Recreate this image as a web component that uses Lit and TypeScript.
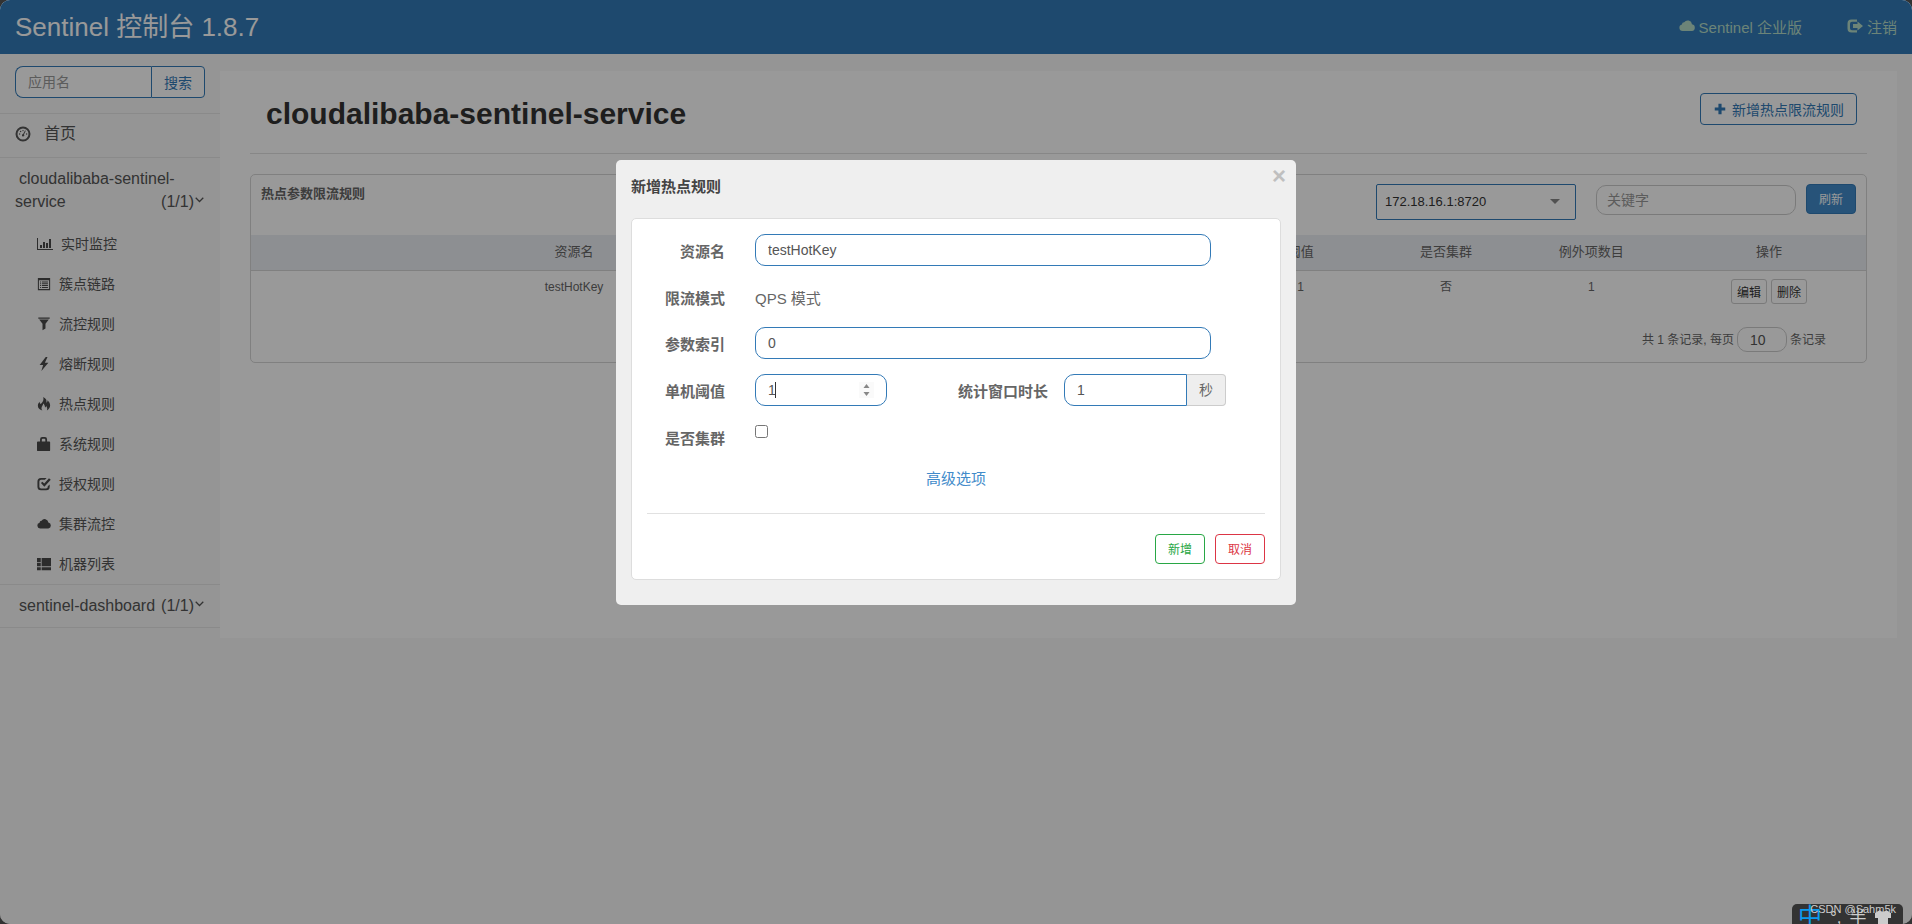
import { LitElement, html, css, svg } from "lit";
import { customElement, property, state } from "lit/decorators.js";

const glyphs: Record<string, unknown> = {
  dashboard: svg`<path fill-rule="evenodd" d="M8 .5a7.5 7.5 0 1 0 0 15 7.5 7.5 0 0 0 0-15zm0 2a5.5 5.5 0 1 1 0 11 5.5 5.5 0 0 1 0-11z"/><circle cx="4.600" cy="8" r=".7"/><circle cx="5.600" cy="5.500" r=".7"/><circle cx="8" cy="4.600" r=".7"/><circle cx="11.600" cy="8" r=".7"/><path d="M10 4.400l.8.4-1.800 3.600a1.200 1.200 0 1 1-.9-.4z"/>`,
  stats: svg`<path d="M0 2h1v11h15v1H0zM3 9h2v3H3zM6 6h2v6H6zM9 7h2v5H9zM12 3h2v9h-2z"/>`,
  list: svg`<path fill-rule="evenodd" d="M1 1h14v14H1zm1.200 2.600v10.200h11.600V3.600z"/><path d="M3.500 5h1.200v1.200H3.500zM5.700 5h6.800v1.200H5.700zM3.500 7.100h1.200v1.200H3.500zM5.700 7.100h6.800v1.200H5.700zM3.500 9.200h1.200v1.200H3.500zM5.700 9.200h6.800v1.200H5.700zM3.500 11.300h1.200v1.200H3.500zM5.700 11.300h6.800v1.200H5.700z"/>`,
  filter: svg`<path d="M1.500 .5h13V2h-13zM2.500 2.800h11L9.700 7.800V13L6.300 15V7.800z"/>`,
  flash: svg`<path d="M10 0L3 9h4l-2 7 8-9.500H9L12 0z"/>`,
  fire: svg`<path d="M7 0c3.500 1.500 4.500 4 3.600 6.500 1-.3 1.500-1.200 1.300-2.700 2.200 1.800 3.100 3.900 3.100 6 0 2.500-1.500 4.400-3.700 5.500.7-1.900.4-3.500-.9-5-.2 1-.6 1.500-1.200 1.700C9 9.700 8.200 8.200 7 7.500c.2 2.100-1.900 3.200-1.900 5.300 0 1 .4 1.900 1 2.700C3 14.700 1 12.700 1 10c0-1.700.8-3.200 2-4.500 0 1.200.3 2 1 2.500C6.400 6.300 8.200 3.500 7 0z"/>`,
  lock: svg`<path fill-rule="evenodd" d="M3.500 5V2.500A2.500 2.500 0 0 1 6 0h3a2.500 2.500 0 0 1 2.500 2.500V5H14a1 1 0 0 1 1 1v9a1 1 0 0 1-1 1H1a1 1 0 0 1-1-1V6a1 1 0 0 1 1-1zM5.500 5h4V3a1 1 0 0 0-1-1h-2a1 1 0 0 0-1 1z"/>`,
  check: svg`<path d="M11 1H4.500a4 4 0 0 0-4 4v6a4 4 0 0 0 4 4h6a4 4 0 0 0 4-4V8.500l-2.200 2.200v.3a2 2 0 0 1-2 2H4.700a2 2 0 0 1-2-2V5.200a2 2 0 0 1 2-2H9z"/><path d="M4.500 6.800l1.600-1.500L8.300 7.500 13.700 1.500 15.700 3.200 8.400 11z"/>`,
  cloud: svg`<path d="M3.500 13a3.300 3.300 0 0 1-.6-6.500A2.300 2.300 0 0 1 5.200 4.300 4.300 4.300 0 0 1 13 6.300 3.400 3.400 0 0 1 13 13z"/>`,
  machines: svg`<path d="M0 1h4.300V5.700H0zM0 6.600h4.300v4.100H0zM0 11.600h4.300v3.400H0zM5.300 1H16V10.700H5.300zM5.300 11.600H16v3.400H5.300z"/>`,
  logout: svg`<path d="M10 1.500H4.500a4 4 0 0 0-4 4v5a4 4 0 0 0 4 4H10v-2.200H5A2 2 0 0 1 3 10.300V5.700a2 2 0 0 1 2-2h5z"/><path d="M10.500 3.500L16 8l-5.500 4.500V10H6V6h4.500z"/>`,
  plus: svg`<path d="M6.200 2h3.600v4.200H14v3.600H9.800V14H6.200V9.800H2V6.200h4.200z"/>`,
  angle: svg`<path d="M2.500 5.500L8 11l5.500-5.500" fill="none" stroke="currentColor" stroke-width="1.800"/>`,
  shirt: svg`<path d="M5 2L0 5v5h3v6h10v-6h3V5l-5-3c-1 2-5 2-6 0z"/>`,
};

@customElement("ui-icon")
export class UiIcon extends LitElement {
  @property() name = "";
  @property({ type: Number }) size = 14;
  static styles = css`
    :host {
      display: inline-flex;
      flex: none;
    }
    svg {
      display: block;
      fill: currentColor;
    }
  `;
  render() {
    return html`<svg width=${this.size} height=${this.size} viewBox="0 0 16 16" aria-hidden="true">${glyphs[this.name]}</svg>`;
  }
}

const base = css`
  :host,
  button,
  input,
  select {
    font-family: "Liberation Sans", Arial, "Noto Sans CJK SC", sans-serif;
  }
  *,
  *::before,
  *::after {
    box-sizing: border-box;
  }
  input,
  select,
  button {
    margin: 0;
    outline: none;
  }
  button {
    cursor: pointer;
    padding: 0;
  }
  a {
    text-decoration: none;
  }
  .field {
    width: 100%;
    height: 32px;
    padding: 0 12px;
    border: 1px solid #337ab7;
    border-radius: 10px;
    background: #fff;
    color: #555;
    font-size: 14px;
  }
  .field::placeholder {
    color: #999;
    opacity: 1;
  }
`;

const menu = [
  ["stats", "实时监控"],
  ["list", "簇点链路"],
  ["filter", "流控规则"],
  ["flash", "熔断规则"],
  ["fire", "热点规则"],
  ["lock", "系统规则"],
  ["check", "授权规则"],
  ["cloud", "集群流控"],
  ["machines", "机器列表"],
];

@customElement("side-menu")
export class SideMenu extends LitElement {
  static styles = [
    base,
    css`
      :host {
        display: block;
        width: 220px;
        flex: none;
        color: #555;
        font-size: 16px;
        line-height: 23px;
      }
      .search {
        display: flex;
        padding: 12px 15px 15px;
        border-bottom: 1px solid #e7e7e7;
      }
      .search .field {
        flex: 1;
        min-width: 0;
        border-right: 0;
        border-radius: 8px 0 0 8px;
      }
      .go {
        width: 54px;
        border: 1px solid #337ab7;
        border-radius: 0 4px 4px 0;
        background: #fff;
        color: #337ab7;
        font-size: 14px;
      }
      .home {
        display: flex;
        align-items: center;
        gap: 13px;
        height: 44px;
        padding: 0 15px 4px;
        border-bottom: 1px solid #e7e7e7;
        color: #555;
      }
      .app {
        display: flow-root;
        padding: 9px 15px 11px;
        color: #555;
        text-indent: 4px;
      }
      .count {
        display: flex;
        float: right;
        text-indent: 0;
      }
      .count ui-icon {
        padding-top: 4px;
      }
      .last {
        padding-bottom: 10px;
        border-top: 1px solid #e7e7e7;
        border-bottom: 1px solid #e7e7e7;
      }
      .list {
        margin: 0;
        padding: 0;
        list-style: none;
      }
      .item {
        display: flex;
        align-items: center;
        gap: 8px;
        height: 40px;
        padding-left: 37px;
        color: #555;
        font-size: 14px;
      }
      .item ui-icon {
        color: #4a4a4a;
      }
    `,
  ];
  render() {
    const count = html`<span class="count">(1/1)<ui-icon name="angle" size="11"></ui-icon></span>`;
    return html`
      <form class="search" @submit=${(e: Event) => e.preventDefault()}>
        <input class="field" type="text" placeholder="应用名" aria-label="应用名" />
        <button class="go" type="submit">搜索</button>
      </form>
      <nav>
        <a class="home" href="#"><ui-icon name="dashboard" size="16"></ui-icon>首页</a>
        <a class="app" href="#">cloudalibaba-sentinel-service${count}</a>
        <ul class="list">
          ${menu.map(
            ([icon, label]) =>
              html`<li>
                <a class="item" href="#"><ui-icon name=${icon} size=${icon === "stats" ? 16 : 14}></ui-icon>${label}</a>
              </li>`
          )}
        </ul>
        <a class="app last" href="#">sentinel-dashboard${count}</a>
      </nav>
    `;
  }
}

@customElement("rules-page")
export class RulesPage extends LitElement {
  static styles = [
    base,
    css`
      :host {
        display: block;
        flex: 1;
        min-width: 0;
        margin: 17px 15px 0 0;
        padding: 0 30px 275px;
        background: #fff;
        color: #666;
        font-size: 12px;
      }
      .head {
        display: flex;
        justify-content: space-between;
        align-items: flex-start;
        height: 83px;
        padding: 22px 10px 0 16px;
        border-bottom: 1px solid #e1e1e1;
      }
      h1 {
        margin: 4px 0 0;
        color: #333;
        font-size: 30px;
        line-height: 34px;
      }
      .add {
        display: flex;
        align-items: center;
        gap: 5px;
        height: 32px;
        padding: 0 12px;
        border: 1px solid #337ab7;
        border-radius: 4px;
        background: #fff;
        color: #337ab7;
        font-size: 14px;
      }
      .card {
        margin-top: 20px;
        border: 1px solid #d5d5d5;
        border-radius: 5px;
      }
      .bar {
        display: flex;
        align-items: flex-start;
        height: 60px;
        padding: 9px 10px 0;
      }
      h2 {
        flex: 1;
        margin: 0;
        font-size: 13px;
        line-height: 20px;
      }
      .pick {
        position: relative;
        width: 200px;
        margin-right: 20px;
      }
      .pick select {
        appearance: none;
        width: 100%;
        height: 36px;
        padding: 0 8px 2px;
        border: 1px solid #337ab7;
        border-radius: 2px;
        background: #fff;
        color: #333;
        font-size: 13px;
      }
      .pick::after {
        content: "";
        position: absolute;
        right: 16px;
        top: 15px;
        border: 5px solid transparent;
        border-top-color: #888;
        border-bottom: 0;
        pointer-events: none;
      }
      .bar .field {
        width: 200px;
        height: 30px;
        margin: 1px 10px 0 0;
        padding: 0 10px;
        border-color: #ccc;
      }
      .refresh {
        width: 50px;
        height: 30px;
        padding-bottom: 2px;
        border: 1px solid #337ab7;
        border-radius: 4px;
        background: #428bca;
        color: #fff;
        font-size: 12px;
      }
      table {
        width: 100%;
        border-collapse: collapse;
        table-layout: fixed;
        text-align: center;
      }
      th {
        height: 35px;
        padding: 0 0 4px;
        border-bottom: 1px solid #d5d5d5;
        background: #eceff3;
        font-size: 13px;
        font-weight: 400;
      }
      td {
        height: 46px;
        padding: 8px 0 0;
        line-height: 16px;
        vertical-align: top;
      }
      .name {
        width: 40%;
      }
      .num {
        width: 9%;
      }
      .act {
        width: 202px;
        padding-left: 8px;
      }
      .mini {
        width: 36px;
        height: 25px;
        border: 1px solid #ccc;
        border-radius: 3px;
        background: #fff;
        color: #333;
        font-size: 12px;
      }
      .acts {
        display: flex;
        justify-content: center;
        gap: 4px;
      }
      .pager {
        display: flex;
        justify-content: flex-end;
        align-items: center;
        gap: 3px;
        padding: 11px 40px 10px 0;
        line-height: 20px;
      }
      .pager .field {
        width: 50px;
        height: 25px;
        border-color: #ccc;
      }
    `,
  ];
  render() {
    return html`
      <header class="head">
        <h1>cloudalibaba-sentinel-service</h1>
        <button class="add"><ui-icon name="plus"></ui-icon>新增热点限流规则</button>
      </header>
      <section class="card">
        <div class="bar">
          <h2>热点参数限流规则</h2>
          <div class="pick">
            <select aria-label="机器"><option>172.18.16.1:8720</option></select>
          </div>
          <input class="field" type="text" placeholder="关键字" aria-label="关键字" />
          <button class="refresh">刷新</button>
        </div>
        <table>
          <thead>
            <tr>
              <th class="name">资源名</th>
              <th>参数索引</th>
              <th>流控模式</th>
              <th class="num">阈值</th>
              <th class="num">是否集群</th>
              <th class="num">例外项数目</th>
              <th class="act">操作</th>
            </tr>
          </thead>
          <tbody>
            <tr>
              <td>testHotKey</td>
              <td>0</td>
              <td>QPS</td>
              <td>1</td>
              <td>否</td>
              <td>1</td>
              <td class="act">
                <div class="acts"><button class="mini">编辑</button><button class="mini">删除</button></div>
              </td>
            </tr>
          </tbody>
        </table>
        <div class="pager">
          <label for="size">共 1 条记录, 每页</label>
          <input class="field" id="size" type="text" value="10" />
          <span>条记录</span>
        </div>
      </section>
    `;
  }
}

@customElement("rule-dialog")
export class RuleDialog extends LitElement {
  static styles = [
    base,
    css`
      :host {
        display: block;
        width: 680px;
        max-width: 100%;
        padding: 15px 15px 25px;
        border-radius: 5px;
        background: #efefef;
        color: #666;
        font-size: 15px;
        line-height: 22px;
      }
      .top {
        display: flex;
        justify-content: space-between;
        align-items: flex-start;
        height: 43px;
      }
      h3 {
        margin: 0;
        color: #444;
        font-size: 15px;
        line-height: 24px;
      }
      .close {
        margin: -10px -5px 0 0;
        border: 0;
        background: none;
        color: #bfbfbf;
        font-size: 24px;
        font-weight: 700;
        line-height: 22px;
      }
      .form {
        padding: 15px;
        border: 1px solid #ddd;
        border-radius: 5px;
        background: #fff;
      }
      .row {
        display: grid;
        grid-template-columns: 78px 1fr;
        column-gap: 30px;
        align-items: start;
        min-height: 32px;
        margin-bottom: 15px;
      }
      .row > label,
      .row > .label,
      .pair > label {
        padding-top: 7px;
        font-weight: 700;
        text-align: right;
      }
      .static {
        min-height: 31px;
      }
      .text {
        padding-top: 7px;
      }
      .row > .field {
        width: auto;
        margin-right: 54px;
      }
      .pair {
        display: flex;
        align-items: flex-start;
        margin-right: 39px;
      }
      .pair > label {
        flex: 1;
        padding-right: 16px;
      }
      .step {
        position: relative;
        width: 132px;
      }
      .step .field {
        caret-color: transparent;
      }
      .caret {
        position: absolute;
        top: 8px;
        left: 20px;
        width: 1px;
        height: 16px;
        background: #333;
      }
      .spin {
        position: absolute;
        top: 8px;
        right: 13px;
        width: 15px;
        height: 16px;
        display: block;
        fill: #888;
        background: #fafafa;
      }
      .unit {
        display: flex;
        width: 162px;
      }
      .unit .field {
        flex: 1;
        min-width: 0;
        border-radius: 10px 0 0 10px;
      }
      .sec {
        width: 39px;
        border: 1px solid #ccc;
        border-left: 0;
        border-radius: 0 4px 4px 0;
        background: #eee;
        font-size: 14px;
        line-height: 30px;
        text-align: center;
      }
      .tick {
        width: 13px;
        height: 13px;
        margin-top: 4px;
      }
      .more {
        display: block;
        padding: 0 0 23px;
        color: #428bca;
        text-align: center;
      }
      .foot {
        display: flex;
        justify-content: flex-end;
        gap: 10px;
        padding-top: 20px;
        border-top: 1px solid #e1e1e1;
      }
      .btn {
        width: 50px;
        height: 30px;
        padding-bottom: 2px;
        border: 1px solid currentColor;
        border-radius: 4px;
        background: #fff;
        font-size: 12px;
      }
      .ok {
        color: #28a745;
      }
      .no {
        color: #dc3545;
      }
    `,
  ];
  @state() private threshold = "1";
  firstUpdated() {
    this.renderRoot.querySelector<HTMLInputElement>("#limit")?.focus();
  }
  render() {
    return html`
      <div class="top">
        <h3>新增热点规则</h3>
        <button class="close" aria-label="关闭">×</button>
      </div>
      <form class="form" @submit=${(e: Event) => e.preventDefault()}>
        <div class="row">
          <label for="res">资源名</label>
          <input class="field" id="res" type="text" value="testHotKey" />
        </div>
        <div class="row static">
          <span class="label">限流模式</span>
          <span class="text">QPS 模式</span>
        </div>
        <div class="row">
          <label for="idx">参数索引</label>
          <input class="field" id="idx" type="text" value="0" />
        </div>
        <div class="row">
          <label for="limit">单机阈值</label>
          <div class="pair">
            <div class="step">
              <input
                class="field"
                id="limit"
                type="text"
                inputmode="numeric"
                .value=${this.threshold}
                @input=${(e: Event) => (this.threshold = (e.target as HTMLInputElement).value)}
              />
              <span class="caret"></span>
              <svg class="spin" viewBox="0 0 15 16" aria-hidden="true"><path d="M7.500 2l3 4h-6zM7.500 14l3-4h-6z" /></svg>
            </div>
            <label for="win">统计窗口时长</label>
            <div class="unit">
              <input class="field" id="win" type="text" value="1" />
              <span class="sec">秒</span>
            </div>
          </div>
        </div>
        <div class="row">
          <label for="cluster">是否集群</label>
          <input class="tick" id="cluster" type="checkbox" />
        </div>
        <a class="more" href="#">高级选项</a>
        <div class="foot">
          <button class="btn ok" type="submit">新增</button>
          <button class="btn no" type="button">取消</button>
        </div>
      </form>
    `;
  }
}

@customElement("app-root")
export class AppRoot extends LitElement {
  static styles = [
    base,
    css`
      :host {
        display: block;
        background: #333;
      }
      .window {
        position: relative;
        min-height: 100vh;
        overflow: hidden;
        border-radius: 10px;
        background: #f8f8f8;
      }
      .nav {
        display: flex;
        align-items: center;
        gap: 45px;
        height: 54px;
        padding: 0 15px 2px;
        background: #337ab7;
      }
      .brand {
        flex: 1;
        padding-bottom: 4px;
        color: #fff;
        font-size: 26px;
      }
      .link {
        display: flex;
        align-items: center;
        gap: 4px;
        color: #b4dcc8;
        font-size: 15px;
      }
      .main {
        display: flex;
        align-items: flex-start;
      }
      .shade {
        position: absolute;
        inset: 0;
        display: flex;
        justify-content: center;
        align-items: flex-start;
        padding-top: 160px;
        background: rgba(0, 0, 0, 0.4);
      }
      .ime {
        position: absolute;
        right: 9px;
        bottom: 0;
        display: flex;
        gap: 8px;
        width: 111px;
        height: 20px;
        padding: 0 6px;
        overflow: hidden;
        border-radius: 5px 5px 0 0;
        background: #333;
        color: #ccc;
        font-size: 17px;
        line-height: 28px;
        white-space: nowrap;
      }
      .cn {
        color: #0a9bf0;
        font-size: 24px;
        line-height: 26px;
      }
      .shirt {
        padding-top: 4px;
      }
      .mark {
        position: absolute;
        right: 16px;
        bottom: 7px;
        color: #ccc;
        font-size: 11px;
        line-height: 16px;
      }
    `,
  ];
  render() {
    return html`
      <div class="window">
        <header class="nav">
          <span class="brand">Sentinel 控制台 1.8.7</span>
          <a class="link" href="#"><ui-icon name="cloud" size="16"></ui-icon>Sentinel 企业版</a>
          <a class="link" href="#"><ui-icon name="logout" size="16"></ui-icon>注销</a>
        </header>
        <div class="main">
          <side-menu></side-menu>
          <rules-page></rules-page>
        </div>
        <div class="shade">
          <rule-dialog role="dialog" aria-label="新增热点规则"></rule-dialog>
        </div>
        <div class="ime">
          <span class="cn">中</span><span>°,</span><span>半</span><ui-icon class="shirt" name="shirt" size="16"></ui-icon>
        </div>
        <span class="mark">CSDN @Sahm5k</span>
      </div>
    `;
  }
}
